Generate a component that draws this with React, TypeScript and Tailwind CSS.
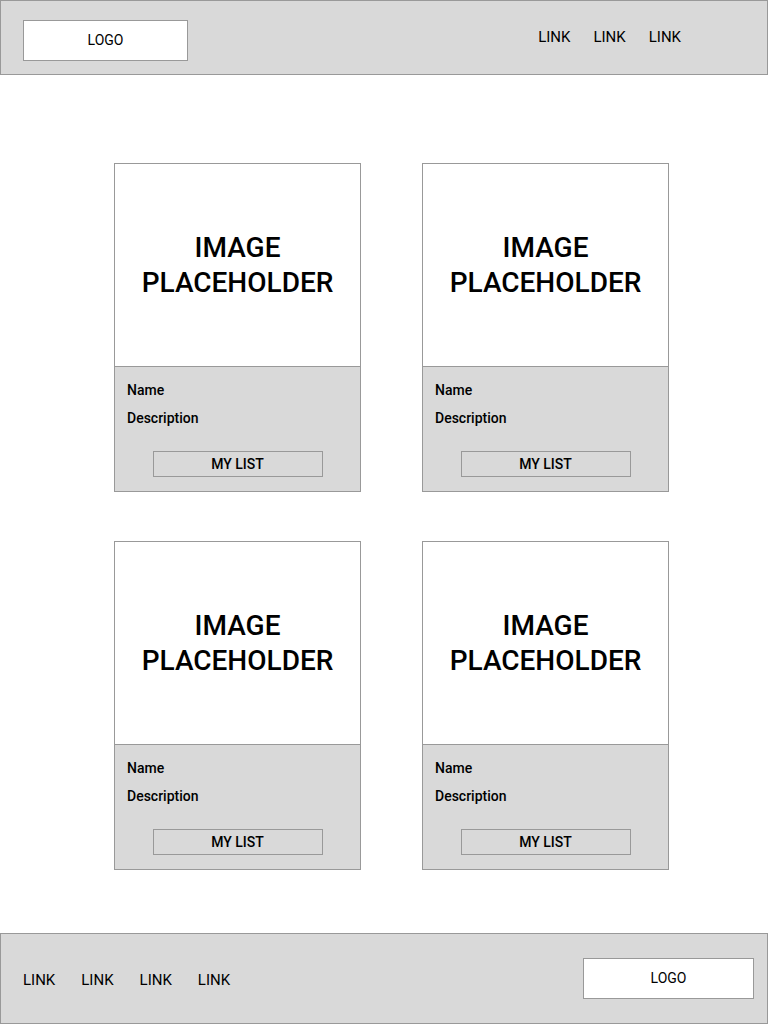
const cards = [1, 2, 3, 4];

const Card = () => (
  <div className="w-[247px] h-[329px] border border-[#999] flex flex-col bg-[#d9d9d9]">
    <div className="h-[203px] bg-white border-b border-[#999] flex items-center justify-center">
      <p className="text-[28px] leading-[35px] font-medium text-center text-black">
        IMAGE
        <br />
        PLACEHOLDER
      </p>
    </div>
    <div className="flex flex-col px-3 pt-[14px] text-[14px] font-medium text-black">
      <span className="leading-[18px]">Name</span>
      <span className="leading-[18px] mt-[10px]">Description</span>
      <button className="self-center mt-[24px] w-[170px] h-[26px] border border-[#999] text-[14px] font-medium leading-none">
        MY LIST
      </button>
    </div>
  </div>
);

export default function App() {
  return (
    <div className="w-[768px] h-[1024px] bg-white flex flex-col font-['Roboto',sans-serif]">
      <header className="h-[75px] bg-[#d9d9d9] border border-[#999] flex items-center">
        <div className="ml-[22px] mt-[6px] w-[165px] h-[41px] bg-white border border-[#999] flex items-center justify-center text-[14px]">
          LOGO
        </div>
        <nav className="ml-auto mr-[86px] mb-[1px] flex gap-[23px] text-[15px] text-black">
          <span>LINK</span>
          <span>LINK</span>
          <span>LINK</span>
        </nav>
      </header>

      <main className="flex-1 pt-[88px] pl-[114px]">
        <div className="grid grid-cols-[247px_247px] gap-x-[61px] gap-y-[49px]">
          {cards.map((c) => (
            <Card key={c} />
          ))}
        </div>
      </main>

      <footer className="h-[91px] bg-[#d9d9d9] border border-[#999] flex items-center">
        <nav className="ml-[22px] mt-[4px] flex gap-[26px] text-[15px] text-black">
          <span>LINK</span>
          <span>LINK</span>
          <span>LINK</span>
          <span>LINK</span>
        </nav>
        <div className="ml-auto mr-[13px] w-[171px] h-[41px] bg-white border border-[#999] flex items-center justify-center text-[14px]">
          LOGO
        </div>
      </footer>
    </div>
  );
}
